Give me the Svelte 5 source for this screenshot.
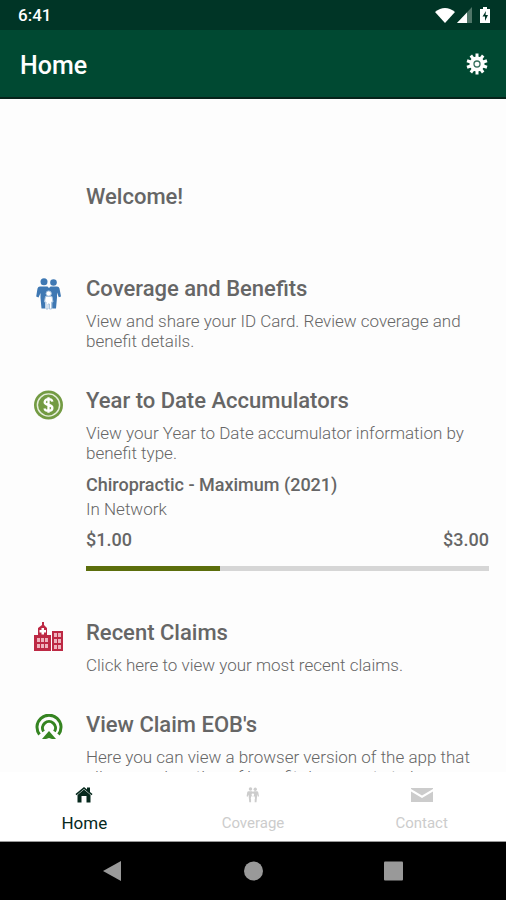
<script>
  const used = 1;
  const limit = 3;

  let tab = $state("Home");

  const tabs = ["Home", "Coverage", "Contact"];

  const items = [
    {
      icon: "family",
      title: "Coverage and Benefits",
      text: "View and share your ID Card. Review coverage and benefit details.",
    },
    {
      icon: "dollar",
      title: "Year to Date Accumulators",
      text: "View your Year to Date accumulator information by benefit type.",
      meter: true,
    },
    {
      icon: "building",
      title: "Recent Claims",
      text: "Click here to view your most recent claims.",
    },
    {
      icon: "signal",
      title: "View Claim EOB's",
      text: "Here you can view a browser version of the app that allows explanation of benefit documents to be displayed.",
    },
  ];

  const money = (n) => "$" + n.toFixed(2);
</script>

{#snippet family()}
  <circle cx="9" cy="3.800" r="3.500" />
  <circle cx="18.500" cy="4.500" r="3.300" />
  <path d="M5 8.500h7.500l1.500 1.500 1.500-1.500H22q2 0 2.500 2l1.500 8-2.200.8-1.800-4.800v5l-1 11h-3.800V20h-7v10.500H6.500L5.500 20v-5l-2 4.500-2.300-1L2.500 10.500q.5-2 2.500-2z" />
  <circle class="child" cx="13.700" cy="15.500" r="2.600" />
  <path class="child" d="M10.500 18.500h6.500l1 5.500h-1.500v7h-2v-5h-1.500v5h-2v-7H9.500z" />
{/snippet}

<div class="app">
  <div class="status">
    <span>6:41</span>
    <div class="indicators">
      <svg width="20" height="15" viewBox="0 0 20 15"><path d="M0 4Q10-4 20 4L10 15z" fill="#fff" /></svg>
      <svg width="15" height="16" viewBox="0 0 15 16">
        <path d="M15 0v16H0z" fill="#4f7668" />
        <path d="M10 5.500V16H0z" fill="#fff" />
      </svg>
      <svg class="battery" width="10" height="16" viewBox="0 0 10 16">
        <path d="M3 0h4v2h3v14H0V2h3z" fill="#fff" />
        <path d="M6 4 2.500 9.500H5V14l3-6H5.500z" fill="#003526" />
      </svg>
    </div>
  </div>

  <header>
    <h1>Home</h1>
    <button class="settings" aria-label="Settings">
      <svg width="22" height="22" viewBox="-11 -11 22 22">
        <circle r="7.500" fill="#fff" />
        {#each [0, 36, 72, 108, 144] as angle}
          <rect x="-1.500" y="-10.500" width="3" height="21" fill="#fff" transform="rotate({angle})" />
        {/each}
        <circle r="3" fill="#fff" stroke="#376f5d" stroke-width="1.300" />
      </svg>
    </button>
  </header>

  <main>
    <h2 class="welcome">Welcome!</h2>
    {#each items as item}
      <section class:tall={item.meter}>
        <div class="icon">
          {#if item.icon === "family"}
            <svg width="28" height="32" viewBox="0 0 28 32" fill="#3e78b3">{@render family()}</svg>
          {:else if item.icon === "dollar"}
            <svg width="30" height="30" viewBox="0 0 30 30">
              <circle cx="15" cy="15" r="15" fill="#739b43" />
              <circle cx="15" cy="15" r="11.500" fill="none" stroke="#e6eedb" stroke-width="1.500" />
              <path d="M19 11.500q-.5-2.500-4-2.500t-4 3q0 2.300 4 3t4 3q0 3-4 3t-4-2.500M15 7v16" fill="none" stroke="#fff" stroke-width="2.400" />
            </svg>
          {:else if item.icon === "building"}
            <svg width="29" height="30" viewBox="0 0 29 30">
              <path d="M8 0h2v3l3 3v7h4v16H0V13h4V6l4-3z" fill="#bd2944" />
              <path d="M7.500 6h2.500v2h2v2.500h-2v2H7.500v-2h-2V8h2z" fill="#fff" />
              <rect x="18" y="9" width="11" height="20" fill="#bd2944" />
              <path d="M3 16h3v4H3zm4 0h3v4H7zm4 0h3v4h-3zM3 22h3v4H3zm4 0h3v4H7zm4 0h3v4h-3zM20 11h3v4h-3zm4 0h3v4h-3zm-4 6h3v4h-3zm4 0h3v4h-3zm-4 6h3v4h-3zm4 0h3v4h-3z" fill="#eeb3bd" />
            </svg>
          {:else}
            <svg width="28" height="28" viewBox="0 0 28 28">
              <path d="M4.500 20.500a12 12 0 1 1 19 0M8.500 17.500a6.500 6.500 0 1 1 11 0" fill="none" stroke="#358421" stroke-width="3" />
              <path d="M14 17l7 8h-4l-3-1-3 1H7z" fill="#358421" />
            </svg>
          {/if}
        </div>
        <div class="body">
          <h2>{item.title}</h2>
          <p>{item.text}</p>
          {#if item.meter}
            <h3>Chiropractic - Maximum (2021)</h3>
            <p class="network">In Network</p>
            <div class="amounts">
              <span>{money(used)}</span>
              <span>{money(limit)}</span>
            </div>
            <div class="bar">
              <div class="fill" style="width: {(used / limit) * 100}%"></div>
            </div>
          {/if}
        </div>
      </section>
    {/each}
  </main>

  <nav class="tabs">
    {#each tabs as name}
      <button class:active={tab === name} onclick={() => (tab = name)}>
        {#if name === "Home"}
          <svg width="18" height="18" viewBox="0 0 18 18" fill="currentColor">
            <path d="M9 1l3 2.500V1.500h3v4.500L17.500 8l-1 1.200L9 3 1.500 9.200.5 8z" />
            <path d="M2.500 9 9 3.500 15.500 9v7.500h-4V10h-5v6.500h-4z" />
          </svg>
        {:else if name === "Coverage"}
          <svg width="14" height="18" viewBox="0 0 28 32" fill="currentColor">{@render family()}</svg>
        {:else}
          <svg width="22" height="18" viewBox="0 0 22 18" fill="currentColor">
            <path d="M0 2h22v1L11 9.500 0 3z" />
            <path d="M0 5.500 11 12l11-6.500V16H0z" />
          </svg>
        {/if}
        <span>{name}</span>
      </button>
    {/each}
  </nav>

  <div class="system">
    <button aria-label="Back">
      <svg width="22" height="22" viewBox="0 0 22 22"><path d="M1 11 19 1v20z" /></svg>
    </button>
    <button aria-label="Home screen">
      <svg width="22" height="22" viewBox="0 0 22 22"><circle cx="11.500" cy="11" r="9.500" /></svg>
    </button>
    <button aria-label="Recent apps">
      <svg width="22" height="22" viewBox="0 0 22 22"><rect x="2" y="1.500" width="19" height="19" rx="1" /></svg>
    </button>
  </div>
</div>

<style>
  :global(body) {
    margin: 0;
  }
  .app {
    display: flex;
    flex-direction: column;
    height: 100vh;
    background: #fdfdfd;
    color: #666;
    font-family: Roboto, "Liberation Sans", sans-serif;
  }
  h1,
  h2,
  h3,
  p {
    margin: 0;
  }
  button {
    padding: 0;
    border: 0;
    background: none;
    font: inherit;
    cursor: pointer;
  }
  svg {
    display: block;
  }
  .status {
    display: flex;
    justify-content: space-between;
    align-items: center;
    height: 30px;
    padding: 0 16px 0 18px;
    background: #003526;
    color: #fff;
    font-size: 17px;
    font-weight: 500;
  }
  .indicators {
    display: flex;
    align-items: center;
    gap: 2px;
  }
  .battery {
    margin-left: 6px;
  }
  header {
    display: flex;
    justify-content: space-between;
    align-items: center;
    height: 67px;
    padding: 0 18px 0 20px;
    border-bottom: 2px solid #06231a;
    background: #004932;
    color: #fff;
  }
  h1 {
    padding-top: 4px;
    font-size: 25px;
    font-weight: 500;
  }
  main {
    flex: 1;
    min-height: 0;
    overflow: hidden;
    padding: 83px 17px 0 34px;
  }
  h2 {
    font-size: 22px;
    font-weight: 500;
    line-height: 30px;
  }
  .welcome {
    margin: 0 0 62px 52px;
  }
  section {
    display: flex;
    margin-bottom: 35px;
  }
  .tall {
    margin-bottom: 47px;
  }
  .icon {
    display: flex;
    justify-content: center;
    flex: none;
    width: 29px;
    margin-right: 23px;
    padding-top: 4px;
  }
  .child {
    fill: #fff;
    stroke: #a9c4df;
    stroke-width: 1;
  }
  .body {
    flex: 1;
  }
  p {
    margin-top: 7px;
    font-size: 17px;
    font-weight: 300;
    line-height: 20px;
  }
  h3 {
    margin-top: 10px;
    font-size: 18px;
    font-weight: 500;
    line-height: 24px;
  }
  .network {
    margin-top: 2px;
  }
  .amounts {
    display: flex;
    justify-content: space-between;
    margin-top: 9px;
    font-size: 18px;
    font-weight: 500;
    line-height: 24px;
  }
  .bar {
    height: 5px;
    margin-top: 14px;
    background: #d6d6d6;
  }
  .fill {
    height: 100%;
    background: #5c6e0c;
  }
  .tabs {
    display: grid;
    grid-template-columns: repeat(3, 1fr);
    height: 69px;
    border-bottom: 1px solid #999;
    background: #fff;
  }
  .tabs button {
    display: flex;
    flex-direction: column;
    align-items: center;
    gap: 9px;
    padding-top: 14px;
    color: #ccc;
    font-size: 15px;
    line-height: 20px;
  }
  .tabs .child {
    fill: #fff;
    stroke: none;
  }
  .tabs .active {
    color: #06291d;
    font-size: 17px;
  }
  .system {
    display: flex;
    justify-content: center;
    align-items: center;
    gap: 118px;
    height: 58px;
    background: #000;
  }
  .system svg {
    fill: #999;
  }
</style>
